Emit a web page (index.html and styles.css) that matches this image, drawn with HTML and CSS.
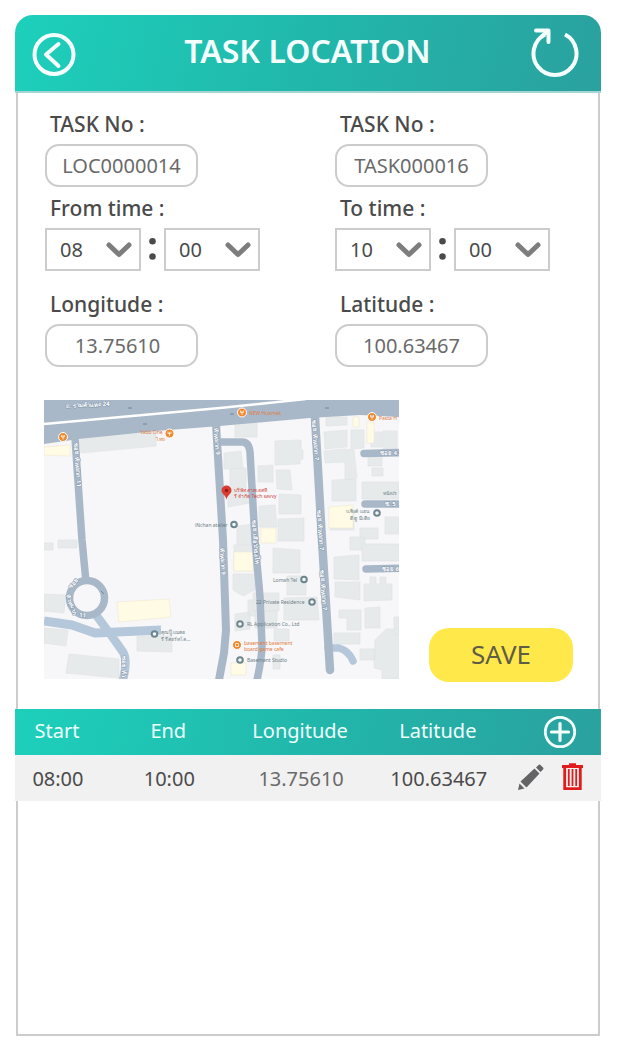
FILE: index.html
```html
<!DOCTYPE html>
<html lang="en">
<head>
<meta charset="utf-8">
<meta name="viewport" content="width=device-width, initial-scale=1">
<title>Task Location</title>
<link rel="stylesheet" href="styles.css">
</head>
<body>
<main class="screen">
  <header class="topbar">
    <button class="icon-btn" type="button" aria-label="Back">
      <svg width="44" height="46" viewBox="0 0 44 46" fill="none" stroke="#f4fffe" stroke-width="4"><circle cx="22" cy="24.500" r="19.500"/><path d="M26.500 14 14 24.500 26.500 36" stroke-linecap="round" stroke-linejoin="round"/></svg>
    </button>
    <h1 class="title">TASK LOCATION</h1>
    <button class="icon-btn" type="button" aria-label="Refresh">
      <svg width="48" height="50" viewBox="0 0 48 50" fill="none" stroke="#f4fffe" stroke-width="4"><path d="M34 6.500A21.500 21.500 0 1 1 14 6.500"/><path d="M5 2.500H17.500V14" stroke-linecap="round" stroke-linejoin="round"/><path d="M17 3 10 9"/></svg>
    </button>
  </header>

  <form class="form" id="task-form">
    <div class="fields">
      <div class="field">
        <label for="loc-no">TASK No :</label>
        <input class="box" id="loc-no" value="LOC0000014">
      </div>
      <div class="field">
        <label for="task-no">TASK No :</label>
        <input class="box" id="task-no" value="TASK000016">
      </div>
      <div class="field">
        <label for="from-hour">From time :</label>
        <div class="time">
          <span class="pick"><select id="from-hour"><option>08</option></select><svg class="chev" viewBox="0 0 26 18"><path d="M3 4 13 13.500 23 4"/></svg></span>
          <svg class="dots" viewBox="0 0 6 22"><circle cx="3" cy="3" r="3"/><circle cx="3" cy="17" r="3"/></svg>
          <span class="pick"><select aria-label="From minute"><option>00</option></select><svg class="chev" viewBox="0 0 26 18"><path d="M3 4 13 13.500 23 4"/></svg></span>
        </div>
      </div>
      <div class="field">
        <label for="to-hour">To time :</label>
        <div class="time">
          <span class="pick"><select id="to-hour"><option>10</option></select><svg class="chev" viewBox="0 0 26 18"><path d="M3 4 13 13.500 23 4"/></svg></span>
          <svg class="dots" viewBox="0 0 6 22"><circle cx="3" cy="3" r="3"/><circle cx="3" cy="17" r="3"/></svg>
          <span class="pick"><select aria-label="To minute"><option>00</option></select><svg class="chev" viewBox="0 0 26 18"><path d="M3 4 13 13.500 23 4"/></svg></span>
        </div>
      </div>
      <div class="field spaced">
        <label for="lng">Longitude :</label>
        <input class="box centered" id="lng" value="13.75610">
      </div>
      <div class="field spaced">
        <label for="lat">Latitude :</label>
        <input class="box" id="lat" value="100.63467">
      </div>
    </div>

    <div class="place">
      <svg class="map" viewBox="0 0 355 279" role="img" aria-label="Map of the task location">
        <rect width="355" height="279" fill="#f7f6f8"/>
        <g fill="#e7eaeb" stroke="#dfe2e4" stroke-width=".6">
          <path d="M35 40 112 28V46L37 53ZM0 143H9V150H0ZM14 140H33V148H14ZM0 194 22 195 20 213 0 211ZM0 228 24 230 22 246 0 243ZM25 254 75 259V278L22 273ZM93 236H128V252L93 251Z"/>
          <path d="M191 23H213V37H191ZM180 53 197 51 199 68 180 69ZM186 69 202 68V90H186ZM184 91H206V103L184 107ZM193 126 209 124V145L193 147ZM231 41 257 40V49L259 50V59L256 60V64L231 65ZM214 66 229 65V82H214ZM232 70H246L248 90 233 89ZM235 94 257 95V114H235ZM215 106 231 105 233 127H215ZM234 119 260 118V141H234Z"/>
          <path d="M282 17H303V25L282 26ZM307 30H320V48L307 49ZM280 32 303 30V47L281 49ZM280 51 300 49 310 50 313 78 301 80V62L281 63ZM288 80 312 79V101H288ZM318 82H355V99H318ZM324 57 338 56V66H324ZM328 68H339V76H328ZM327 32H338V47H327ZM339 31H353V49H339ZM286 111H310V130H286ZM316 128H334V139H316ZM341 117H355V134H341ZM306 137H321V150H306Z"/>
          <path d="M190 145H213V171H190ZM229 148 256 150V173H229ZM189 174H211V190L199 196 189 190ZM209 193H235V211H209ZM204 200H216V216H204ZM191 214 206 212V229L191 231ZM243 176H262V195H243ZM240 198 273 197 275 220H240ZM211 211H233V228H211ZM230 229H245V241H230ZM229 255H236V269H229Z"/>
          <path d="M290 157 315 155V180L290 179ZM318 144H355V161H318ZM291 182H316V200L291 197ZM320 184H326V177H332V184H336V177H342V184H348V200L320 201ZM295 210H317V230H303V218H295ZM321 208 336 207V228H321ZM350 217H355V235H350ZM290 233H316V244H290ZM316 249H331V260H316ZM331 240 342 229H355V279H338V270L330 268Z"/>
        </g>
        <g fill="#fffbe5" stroke="#efe9d2" stroke-width=".6">
          <path d="M0 47 26 45V56L0 55ZM73 202 125 199 127 217 75 222ZM190 152H209V171H190ZM285 107 309 105V128H285ZM309 17H315V27H309ZM323 22H330V43H323ZM217 128H232V143H217ZM187 263H202V275H187Z"/>
        </g>
        <g fill="none" stroke="#b5c7da" stroke-linejoin="round">
          <path d="M0 221 28 225 51 233 117 230" stroke-width="9"/>
          <path d="M52 215 67 235 79 252Q84 260 79 280" stroke-width="8.500"/>
          <path d="M284 248H295Q305 251 309 261" stroke-width="7.500" stroke-linecap="round"/>
        </g>
        <path d="M0 0H355V17L316 15 266 18 176 26 112 31 35 39 0 44Z" fill="#a9b8c8"/>
        <g fill="none" stroke="#a9b8c8" stroke-linejoin="round">
          <path d="M31 38 38 140 42 182" stroke-width="7.500"/>
          <circle cx="43" cy="198" r="17.500" stroke-width="7.500" fill="#f7f6f8"/>
          <path d="M172 24 179 140 182 230 180 253 175 280" stroke-width="8"/>
          <path d="M174 42H198Q205 42 206 52L211 140 216 197 218 245Q218 257 213 280" stroke-width="7.500"/>
          <path d="M271 17 278 140 286 270" stroke-width="8.500" stroke-linecap="round"/>
          <path d="M320 53.500 360 52.500M321 104H360M322 169 360 168" stroke-width="7.500" stroke-linecap="round"/>
        </g>
        <path d="M0 24 176 8 262-1" fill="none" stroke="#fff" stroke-width="2.500"/>
        <path d="M84 8H88M99 24H103M186 14H190M281 8H285M57 191 60 194" stroke="#71869b"/>
        <g class="road-name">
          <text transform="translate(22 8) rotate(-3)">ถ. รามคำแหง 24</text>
          <text transform="translate(30 43) rotate(86)">ซอย หัวหมาก 11</text>
          <text transform="translate(170 28) rotate(86)">หัวหมาก 9</text>
          <text transform="translate(176 148) rotate(87)">หัวหมาก 9</text>
          <text transform="translate(208 120) rotate(86)">ซอย เสือป่าธงไท</text>
          <text transform="translate(268 20) rotate(86)">ซอย หัวหมาก 7</text>
          <text transform="translate(273 110) rotate(86)">ซอย หัวหมาก 7</text>
          <text transform="translate(276 170) rotate(86)">ซอย หัวหมาก 7</text>
          <text transform="translate(78 256) rotate(89)">ซอย หัว</text>
          <text transform="translate(27 189) rotate(-50)">ซอย</text>
          <text transform="translate(22 195) rotate(70)">หัวหมาก</text>
          <text transform="translate(35 217) rotate(5)">11</text>
          <text x="336" y="55">ซอย 4</text><text x="341" y="106">ซ. 5</text><text x="338" y="171">ซอย 6</text>
        </g>
        <g class="food">
          <g fill="#ef8a32" stroke="#fff"><circle cx="19" cy="37" r="4.500"/><circle cx="125.500" cy="33.500" r="4.500"/><circle cx="198" cy="12.500" r="4.500"/><circle cx="328" cy="17" r="4.500"/><circle cx="193" cy="245" r="4.500"/></g>
          <path d="M17.500 35V37H20.500V35M19 35V39.500M124 31.500V33.500H127V31.500M125.500 32V36M196.500 10.500V12.500H199.500V10.500M198 11V15M326.500 15V17H329.500V15M328 15V19.500M191.500 243.500H194.500V246.500H191.500Z" fill="none" stroke="#fff" stroke-width=".7"/>
          <text x="96" y="34">Yabb One</text><text x="112" y="41">ไทย</text>
          <text x="205" y="15">NEW Huamak</text><text x="335" y="20">Pasta H</text>
          <text x="200" y="245">basement basement</text><text x="200" y="251">board game cafe</text>
        </g>
        <g fill="#f7f6f8" stroke="#6d878f" stroke-width="2"><circle cx="190" cy="124.500" r="2.800"/><circle cx="333" cy="113" r="2.800"/><circle cx="260" cy="179.500" r="2.800"/><circle cx="268" cy="202" r="2.800"/><circle cx="196" cy="224" r="2.800"/><circle cx="196" cy="260" r="2.800"/><circle cx="110.500" cy="234" r="2.800"/></g>
        <g class="poi">
          <text x="151" y="127">iNchan atelier</text>
          <text x="302" y="113">บ.ชิงค์ แอน</text><text x="306" y="120">ดี ดู มีเดีย</text><text x="339" y="95">หนังปร</text>
          <text x="229" y="182">Lomah Tel</text>
          <text x="212" y="204">22 Private Residence</text>
          <text x="203" y="226">RL Application Co., Ltd</text>
          <text x="203" y="262">Basement Studio</text>
          <text x="117" y="234">คุณปู๊ แมคอ</text><text x="117" y="241">รี รีสอร์ทโล...</text>
        </g>
        <g class="pin-name"><text x="190" y="92">บริษัท สาคเอสที</text><text x="190" y="98">รี จำกัด Tech savvy</text></g>
        <path d="M182.500 100C182 95 177.500 94 177.500 90.500A5 5 0 0 1 187.500 90.500C187.500 94 183 95 182.500 100Z" fill="#dc3b32"/><circle cx="182.500" cy="90.500" r="1.700" fill="#8e1b17"/>
      </svg>
      <button class="save" type="submit">SAVE</button>
    </div>
  </form>

  <table class="slots">
    <colgroup><col class="c-start"><col class="c-end"><col class="c-lng"><col class="c-lat"><col></colgroup>
    <thead>
      <tr>
        <th scope="col">Start</th><th scope="col">End</th><th scope="col">Longitude</th><th scope="col">Latitude</th>
        <td><div class="actions add">
          <button class="icon-btn" type="button" aria-label="Add"><svg width="34" height="34" viewBox="0 0 34 34" fill="none" stroke="#f4fffe" stroke-width="2.800"><circle cx="17" cy="17" r="14.700"/><path d="M17 8.500V25.500M8.500 17H25.500" stroke-width="3.200" stroke-linecap="round"/></svg></button>
        </div></td>
      </tr>
    </thead>
    <tbody>
      <tr>
        <td>08:00</td><td>10:00</td><td class="muted">13.75610</td><td>100.63467</td>
        <td><div class="actions">
          <button class="icon-btn" type="button" aria-label="Edit"><svg width="28" height="28" viewBox="0 0 28 28" fill="#646466"><path d="M0 26 1.500 19.500 6.500 24.500ZM2.500 17.500 16.500 4.500 21.500 9.500 8.500 23.500ZM18 3.500 20.500 1Q21.500 0 22.500 1L25 3.500Q26 4.500 25 5.500L22.500 8Z"/></svg></button>
          <button class="icon-btn" type="button" aria-label="Delete"><svg width="21" height="30" viewBox="0 0 21 30" fill="none" stroke="#e21b1c"><path d="M0 3.500H21" stroke-width="3"/><path d="M7 1.500H14" stroke-width="2.500"/><path d="M2.700 4V25.700H18.300V4" stroke-width="2.800"/><path d="M6.800 6V23M10.500 6V23M14.200 6V23" stroke-width="1.800"/></svg></button>
        </div></td>
      </tr>
    </tbody>
  </table>
  <div class="rest"></div>
</main>
</body>
</html>
```
FILE: styles.css
```css
* { box-sizing: border-box; }
body { margin: 0; background: #fff; color: #4a4a4a; font-family: "Noto Sans", "Open Sans", sans-serif; }
button, input, select { font: inherit; color: inherit; }
.screen { display: flex; flex-direction: column; min-height: 100vh; padding: 15px 24px 6px 15px; }

.topbar {
  display: grid; grid-template-columns: 52px 1fr 48px; align-items: center;
  height: 78px; padding: 0 22px 0 17px;
  border-bottom: 2px solid #a5d5d3; border-radius: 18px 18px 0 0;
  background: linear-gradient(105deg, #1dd0bb, #22b5aa 55%, #2aa19f);
}
.title { margin: 0; padding-bottom: 4px; color: #f4fffe; font-size: 32px; font-weight: 600; line-height: 40px; text-align: center; white-space: nowrap; }
.icon-btn { display: block; padding: 0; border: 0; background: none; cursor: pointer; }
.icon-btn svg { display: block; }

.form { margin: 0 1px; padding: 17px 1px 27px 27px; border: solid #ccc; border-width: 0 2px; }
.fields { display: grid; grid-template-columns: 1fr 1fr; gap: 7px 28px; }
.field label { display: block; margin-bottom: 6px; padding-left: 5px; font-size: 21px; font-weight: 500; line-height: 28px; }
.spaced { padding-top: 12px; }
.box { display: block; width: 153px; height: 43px; padding: 0 8px; border: 2px solid #ccc; border-radius: 14px; background: #fff; color: #6a6a6a; font-size: 20px; text-align: center; }
.centered { padding: 0 16px 0 8px; }
.time { display: flex; align-items: center; gap: 8px; }
.pick { display: grid; align-items: center; width: 96px; height: 43px; border: 2px solid #ccc; }
.pick select { grid-area: 1 / 1; height: 100%; padding: 0 13px; border: 0; background: none; font-size: 20px; appearance: none; }
.chev { grid-area: 1 / 1; justify-self: end; width: 26px; margin-right: 7px; fill: none; stroke: #7d7d7d; stroke-width: 5; stroke-linecap: round; stroke-linejoin: round; pointer-events: none; }
.dots { width: 7px; height: 24px; fill: #4a4a4a; }

.place { display: flex; align-items: flex-end; gap: 30px; margin-top: 33px; }
.map { flex: 0 1 355px; min-width: 0; margin: 0 0 3px -1px; font-size: 5px; }
.road-name { fill: #fff; stroke: #8296ab; stroke-width: 1px; paint-order: stroke; font-size: 6px; font-weight: 700; }
.food { fill: #e07b3c; }
.poi { fill: #6b8087; }
.pin-name { fill: #d2453f; }
.save { width: 144px; height: 54px; padding: 0 0 2px; border: 0; border-radius: 20px; background: #ffe94a; color: #5f5c45; font-size: 26px; font-weight: 400; cursor: pointer; }

.slots { width: 100%; border-collapse: collapse; table-layout: fixed; font-size: 20px; text-align: center; }
.slots th, .slots td { height: 46px; padding: 0 2px 0 0; }
.slots thead { background: linear-gradient(100deg, #1dd0bb, #22b5aa 55%, #2aa19f); color: #eefffc; }
.slots th { padding: 0 4px 3px 0; font-weight: 400; }
.slots tbody { background: #f1f1f1; }
.slots .muted { color: #6a6a6a; }
.c-start { width: 15%; }
.c-end { width: 23%; }
.c-lng { width: 22%; }
.c-lat { width: 25%; }
.actions { display: flex; align-items: center; gap: 16px; padding-left: 5px; }
.add { padding-left: 30px; }
.rest { flex: 1; margin: 0 1px; border: 2px solid #ccc; border-top: 0; }
```
